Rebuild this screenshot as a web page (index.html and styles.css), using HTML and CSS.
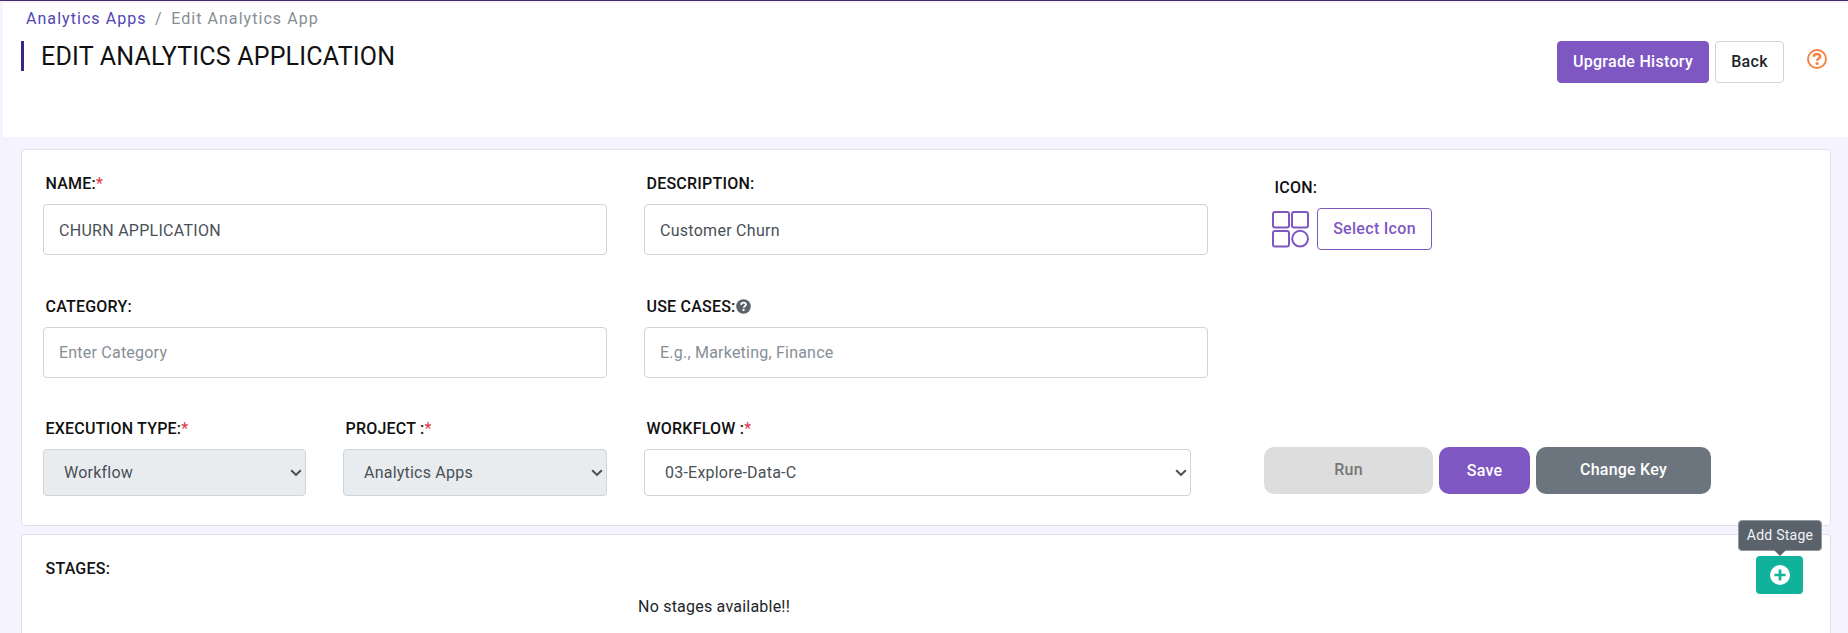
FILE: index.html
```html
<!DOCTYPE html>
<html lang="en">
<head>
<meta charset="utf-8">
<title>Edit Analytics App</title>
<link rel="stylesheet" href="styles.css">
</head>
<body>
<header class="page-header">
  <div class="heading">
    <nav class="breadcrumb"><a class="crumb-link" href="#">Analytics Apps</a><span class="crumb-sep">/</span><span class="crumb-current">Edit Analytics App</span></nav>
    <h1 class="title"><span class="title-text">EDIT ANALYTICS APPLICATION</span></h1>
  </div>
  <div class="header-actions">
    <button class="btn btn-primary upgrade">Upgrade History</button>
    <button class="btn btn-outline back">Back</button>
    <svg class="help" width="20" height="20" viewBox="0 0 20 20" fill="none"><circle cx="10" cy="10" r="9" stroke="#f5813f" stroke-width="1.9"/><path d="M6.7 7.8C7 6 8.3 5 10 5c1.8 0 3.1 1.1 3.1 2.5 0 2-2.9 2-2.9 4.2" stroke="#f5813f" stroke-width="2.6"/><circle cx="10.1" cy="14.5" r="1.6" fill="#f5813f"/></svg>
  </div>
</header>
<main class="content">
  <section class="card details">
    <div class="row">
      <div class="field wide"><label class="label">NAME:<span class="req">*</span></label><input class="control text" value="CHURN APPLICATION"></div>
      <div class="field wide"><label class="label">DESCRIPTION:</label><input class="control text" value="Customer Churn"></div>
      <div class="field icon-field"><span class="label">ICON:</span>
        <div class="icon-pick">
          <svg width="37" height="37" viewBox="0 0 37 37" fill="none" stroke="#7e57c2" stroke-width="2"><rect x="1" y="1" width="16" height="15.4" rx="2"/><rect x="20" y="1" width="16" height="15.4" rx="2"/><rect x="1" y="20" width="16" height="15.4" rx="2"/><circle cx="28.1" cy="27.7" r="7.9"/></svg>
          <button class="btn btn-select">Select Icon</button>
        </div>
      </div>
    </div>
    <div class="row">
      <div class="field wide"><label class="label">CATEGORY:</label><input class="control" placeholder="Enter Category"></div>
      <div class="field wide"><label class="label">USE CASES:<svg class="hint" width="15" height="15" viewBox="0 0 15 15" fill="none"><circle cx="7.5" cy="7.5" r="7.3" fill="#5a626b"/><path d="M5.1 5.8C5.3 4.3 6.2 3.7 7.5 3.7c1.4 0 2.4.8 2.4 1.9 0 1.6-2.2 1.5-2.2 3.2" stroke="#fff" stroke-width="1.8"/><circle cx="7.6" cy="11" r="1.15" fill="#fff"/></svg></label><input class="control" placeholder="E.g., Marketing, Finance"></div>
    </div>
    <div class="row">
      <div class="field half"><label class="label">EXECUTION TYPE:<span class="req">*</span></label>
        <div class="select-box"><select class="control select" disabled><option>Workflow</option></select><svg class="caret" width="12" height="8" viewBox="0 0 12 8"><path d="M1.2 1.2 6 5.9l4.8-4.7" fill="none" stroke="#495057" stroke-width="2.1"/></svg></div></div>
      <div class="field half project"><label class="label">PROJECT :<span class="req">*</span></label>
        <div class="select-box"><select class="control select" disabled><option>Analytics Apps</option></select><svg class="caret" width="12" height="8" viewBox="0 0 12 8"><path d="M1.2 1.2 6 5.9l4.8-4.7" fill="none" stroke="#495057" stroke-width="2.1"/></svg></div></div>
      <div class="field flow"><label class="label">WORKFLOW :<span class="req">*</span></label>
        <div class="select-box"><select class="control select"><option>03-Explore-Data-C</option></select><svg class="caret" width="12" height="8" viewBox="0 0 12 8"><path d="M1.2 1.2 6 5.9l4.8-4.7" fill="none" stroke="#495057" stroke-width="2.1"/></svg></div></div>
      <div class="actions">
        <button class="action run" disabled>Run</button>
        <button class="action save">Save</button>
        <button class="action key">Change Key</button>
      </div>
    </div>
  </section>
  <section class="card stages">
    <div class="stages-body">
      <span class="label">STAGES:</span>
      <p class="empty">No stages available!!</p>
    </div>
    <div class="add-wrap">
      <div class="tooltip">Add Stage</div>
      <button class="add" aria-label="Add Stage"><svg width="20" height="20" viewBox="0 0 20 20"><circle cx="10" cy="10" r="10" fill="#fff"/><path d="M10 4.4v11.2M4.4 10h11.2" stroke="#10b29b" stroke-width="2.7"/></svg></button>
    </div>
  </section>
</main>
</body>
</html>
```
FILE: styles.css
```css
* { box-sizing: border-box; }
body {
  display: flex;
  flex-direction: column;
  margin: 0;
  height: 633px;
  overflow: hidden;
  background: #f5f3ff;
  border-top: 1px solid #432a6b;
  font-family: Roboto, sans-serif;
  font-size: 16px;
  line-height: 24px;
  letter-spacing: .22px;
  color: #212529;
}
button, input, select { font: inherit; letter-spacing: inherit; margin: 0; }
.page-header {
  display: flex;
  flex: none;
  justify-content: space-between;
  margin: 2px 0 0 3px;
  height: 134px;
  padding: 0 21px 0 18px;
  background: #fff;
}
.breadcrumb {
  display: flex;
  padding: 4px 0 0 5px;
  letter-spacing: 1.05px;
  color: #868e96;
}
.crumb-link { color: #5145b5; text-decoration: none; }
.crumb-sep { margin: 0 8.5px; }
.title {
  display: flex;
  align-items: center;
  margin: 10px 0 0;
  height: 30px;
  padding: 1px 0 0 17px;
  border-left: 3px solid #3b2682;
  font-size: 25px;
  font-weight: 400;
  letter-spacing: .2px;
  color: #111;
}
.header-actions { display: flex; align-items: flex-start; padding-top: 38px; }
.btn {
  height: 42px;
  padding: 0;
  border: 1px solid;
  border-radius: 4px;
  font-weight: 500;
  letter-spacing: .3px;
}
.btn-primary { background: #7e57c2; border-color: #7e57c2; color: #fff; }
.btn-outline { background: #fff; border-color: #ced4da; color: #212529; }
.btn-select { width: 115px; background: #fff; border-color: #7e57c2; color: #7e57c2; }
.upgrade { width: 152px; margin-right: 6px; }
.back { width: 69px; }
.help { margin: 8px 0 0 23px; }
.content { display: flex; flex: 1; flex-direction: column; min-height: 0; padding: 12px 17px 0 21px; }
.card {
  background: #fff;
  border: 1px solid #dee2e6;
  border-radius: 4px;
}
.details { flex: none; height: 377px; padding: 22px 21px 0; }
.row { display: flex; gap: 37px; height: 123px; }
.row + .row { height: 122px; }
.field { display: flex; flex-direction: column; gap: 8px; }
.wide { width: 564px; }
.half { width: 263px; }
.project { width: 264px; }
.flow { width: 547px; }
.label { display: block; padding-left: 2.5px; font-weight: 500; color: #111; }
.req { color: #dc3545; font-weight: 400; }
.hint { vertical-align: -2px; }
.control {
  width: 100%;
  height: 51px;
  padding: 0 15px;
  border: 1px solid #ced4da;
  border-radius: 4px;
  background: #fff;
  color: #495057;
}
.text { padding-top: 2px; letter-spacing: .28px; }
.control::placeholder { color: #868e96; opacity: 1; }
.select-box { position: relative; height: 47px; }
.select { height: 47px; padding: 0 20px; appearance: none; }
.select:disabled { background: #e9ecef; color: #495057; opacity: 1; }
.caret { position: absolute; right: 4px; top: 20px; pointer-events: none; }
.icon-field { margin-left: 27px; padding-top: 4px; }
.icon-pick { display: flex; gap: 8px; align-items: center; }
.actions { display: flex; gap: 6px; margin-left: 36px; padding-top: 30px; }
.action {
  height: 47px;
  padding: 0 0 2px;
  border: 0;
  border-radius: 10px;
  font-weight: 500;
  color: #fff;
}
.run { width: 169px; background: #ddd; color: #777; }
.save { width: 91px; padding: 0; background: #7e57c2; }
.key { width: 175px; background: #6c757d; }
.stages { display: flex; flex: 1; justify-content: space-between; margin-top: 8px; padding: 21px 27px 0 21px; border-bottom: 0; border-radius: 4px 4px 0 0; }
.stages-body { padding-top: 1px; }
.empty { margin: 14px 0 0 595px; color: #212529; }
.add-wrap { position: relative; width: 47px; height: 38px; }
.add {
  display: flex;
  align-items: center;
  justify-content: center;
  width: 47px;
  height: 38px;
  padding: 0;
  border: 0;
  border-radius: 4px;
  background: #10b29b;
}
.tooltip {
  position: absolute;
  left: -18px;
  bottom: 43px;
  width: 84px;
  height: 31px;
  border: 1px solid #9499a0;
  border-radius: 4px;
  background: #5a626b;
  color: #f1f3f5;
  font-size: 14px;
  line-height: 28px;
  letter-spacing: .25px;
  text-align: center;
  white-space: nowrap;
}
.tooltip::after {
  content: "";
  position: absolute;
  top: 100%;
  left: 35px;
  border: 6px solid transparent;
  border-top-color: #5a626b;
  border-bottom: 0;
}
```
